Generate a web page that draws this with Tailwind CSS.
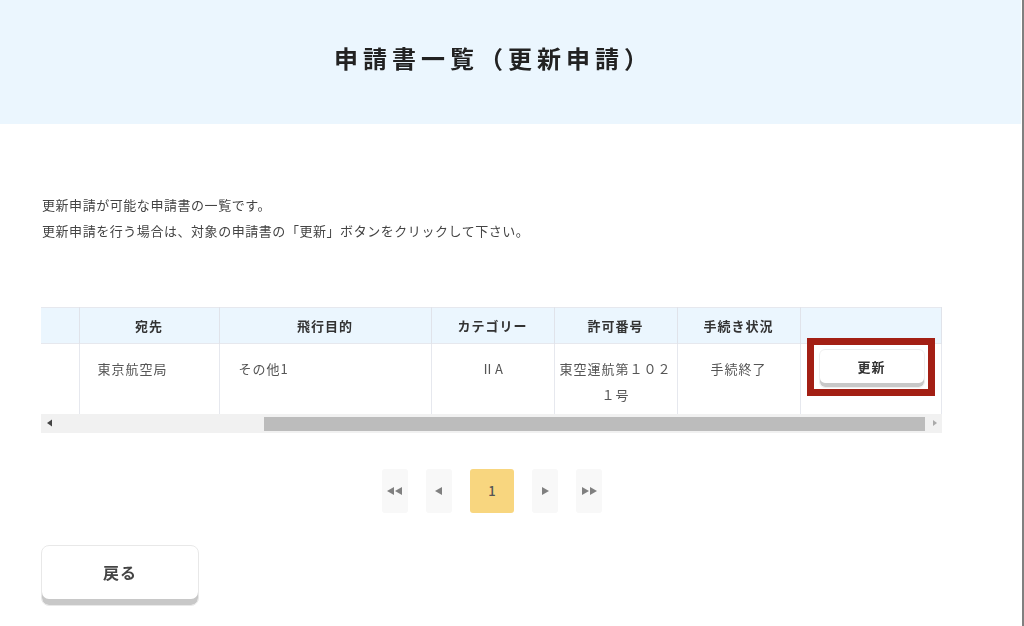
<!DOCTYPE html>
<html lang="ja">
  <head>
    <meta charset="UTF-8" />
    <meta name="viewport" content="width=device-width, initial-scale=1.0" />
    <title>申請書一覧（更新申請）</title>
    <script src="https://cdn.jsdelivr.net/npm/@tailwindcss/browser@4"></script>
  </head>
  <body class="relative bg-white overflow-hidden font-['Noto_Sans_CJK_JP','Noto_Sans',sans-serif] text-[#333]">
    <div class="w-[1024px] h-[626px] blur-[0.5px]">
      <!-- Title band -->
      <header class="w-[1021px] h-[124px] bg-[#ebf6fe] pt-[41px] pr-[34px] text-center">
        <h1 class="text-[24px] leading-[34px] font-bold tracking-[5px] text-[#222]">申請書一覧（更新申請）</h1>
      </header>

      <!-- Intro -->
      <div class="pt-[68px] pl-[42px] text-[13px] leading-[26px] tracking-[0.55px] text-[#444]">
        <p>更新申請が可能な申請書の一覧です。</p>
        <p>更新申請を行う場合は、対象の申請書の「更新」ボタンをクリックして下さい。</p>
      </div>

      <!-- Table -->
      <div class="relative ml-[41px] mt-[63px] w-[901px]">
        <table class="w-[900px] table-fixed border-collapse text-[13px] tracking-[1px] text-center">
          <colgroup>
            <col class="w-[38px]" />
            <col class="w-[140px]" />
            <col class="w-[212px]" />
            <col class="w-[123px]" />
            <col class="w-[123px]" />
            <col class="w-[123px]" />
            <col class="w-[141px]" />
          </colgroup>
          <thead>
            <tr class="h-[36px] bg-[#ebf6fe] border-y border-[#e6e8ee] text-[#333]">
              <th class="font-bold"></th>
              <th class="font-bold border-l border-[#e0e3ea]">宛先</th>
              <th class="font-bold border-l border-[#e0e3ea]">飛行目的</th>
              <th class="font-bold border-l border-[#e0e3ea]">カテゴリー</th>
              <th class="font-bold border-l border-[#e0e3ea]">許可番号</th>
              <th class="font-bold border-l border-[#e0e3ea]">手続き状況</th>
              <th class="font-bold border-x border-[#e0e3ea]"></th>
            </tr>
          </thead>
          <tbody class="text-[#555] align-top leading-[26px]">
            <tr class="h-[70px]">
              <td></td>
              <td class="border-l border-[#e6e8ee] pt-[12px] pl-[18px] text-left">東京航空局</td>
              <td class="border-l border-[#e6e8ee] pt-[12px] pl-[19px] text-left">その他1</td>
              <td class="border-l border-[#e6e8ee] pt-[12px]">ⅡA</td>
              <td class="border-l border-[#e6e8ee] pt-[12px] px-[5px]">東空運航第１０２１号</td>
              <td class="border-l border-[#e6e8ee] pt-[12px]">手続終了</td>
              <td class="border-x border-[#e6e8ee] pt-[5px]">
                <button class="block ml-[18px] w-[106px] h-[39px] rounded-[6px] bg-white border border-[#eee] shadow-[inset_0_-4px_0_#c8c8c8] pb-[4px] text-[13px] tracking-[1px] font-bold text-[#333]">更新</button>
              </td>
            </tr>
          </tbody>
        </table>

        <!-- Horizontal scrollbar -->
        <div class="flex items-center h-[19px] bg-[#f1f1f1]">
          <svg class="w-[223px] h-[8px] shrink-0" viewBox="0 0 223 8">
            <path d="M11 0.5 L6 4 L11 7.5 Z" fill="#444" />
          </svg>
          <div class="self-end mb-[2px] w-[661px] h-[14px] bg-[#bcbcbc]"></div>
          <svg class="w-[17px] h-[8px] shrink-0" viewBox="0 0 17 8">
            <path d="M8 1 L12 4 L8 7 Z" fill="#aaa" />
          </svg>
        </div>

        <!-- Red highlight over the button -->
        <div class="absolute left-[766px] top-[31px] w-[128px] h-[58px] border-[7px] border-[#a31f14]"></div>
      </div>

      <!-- Pagination -->
      <nav class="flex justify-center items-center mt-[36px] pr-[40px] text-[#777]">
        <a class="flex items-center justify-center w-[26px] h-[44px] rounded-[3px] bg-[#f8f8f8]">
          <svg width="20" height="10" viewBox="0 0 20 10"><path d="M9 1 L2 5 L9 9 Z M17 1 L10 5 L17 9 Z" fill="#808080" /></svg>
        </a>
        <a class="flex items-center justify-center w-[26px] h-[44px] ml-[18px] rounded-[3px] bg-[#f8f8f8]">
          <svg width="10" height="10" viewBox="0 0 10 10"><path d="M8 1 L1 5 L8 9 Z" fill="#808080" /></svg>
        </a>
        <a class="flex items-center justify-center w-[44px] h-[44px] ml-[18px] rounded-[3px] bg-[#f8d67f] text-[13px] font-medium text-[#555]">1</a>
        <a class="flex items-center justify-center w-[26px] h-[44px] ml-[18px] rounded-[3px] bg-[#f8f8f8]">
          <svg width="10" height="10" viewBox="0 0 10 10"><path d="M2 1 L9 5 L2 9 Z" fill="#808080" /></svg>
        </a>
        <a class="flex items-center justify-center w-[26px] h-[44px] ml-[18px] rounded-[3px] bg-[#f8f8f8]">
          <svg width="20" height="10" viewBox="0 0 20 10"><path d="M3 1 L10 5 L3 9 Z M11 1 L18 5 L11 9 Z" fill="#808080" /></svg>
        </a>
      </nav>

      <!-- Back -->
      <button class="block ml-[41px] mt-[32px] w-[158px] h-[61px] rounded-[8px] bg-white border border-[#e8e8e8] shadow-[inset_0_-6px_0_#c8c8c8] pb-[6px] text-[16px] tracking-[1px] font-bold text-[#444]">戻る</button>
    </div>

    <!-- Window edge -->
    <div class="absolute top-0 right-0 w-[2px] h-[626px] bg-[#808080]"></div>
  </body>
</html>
